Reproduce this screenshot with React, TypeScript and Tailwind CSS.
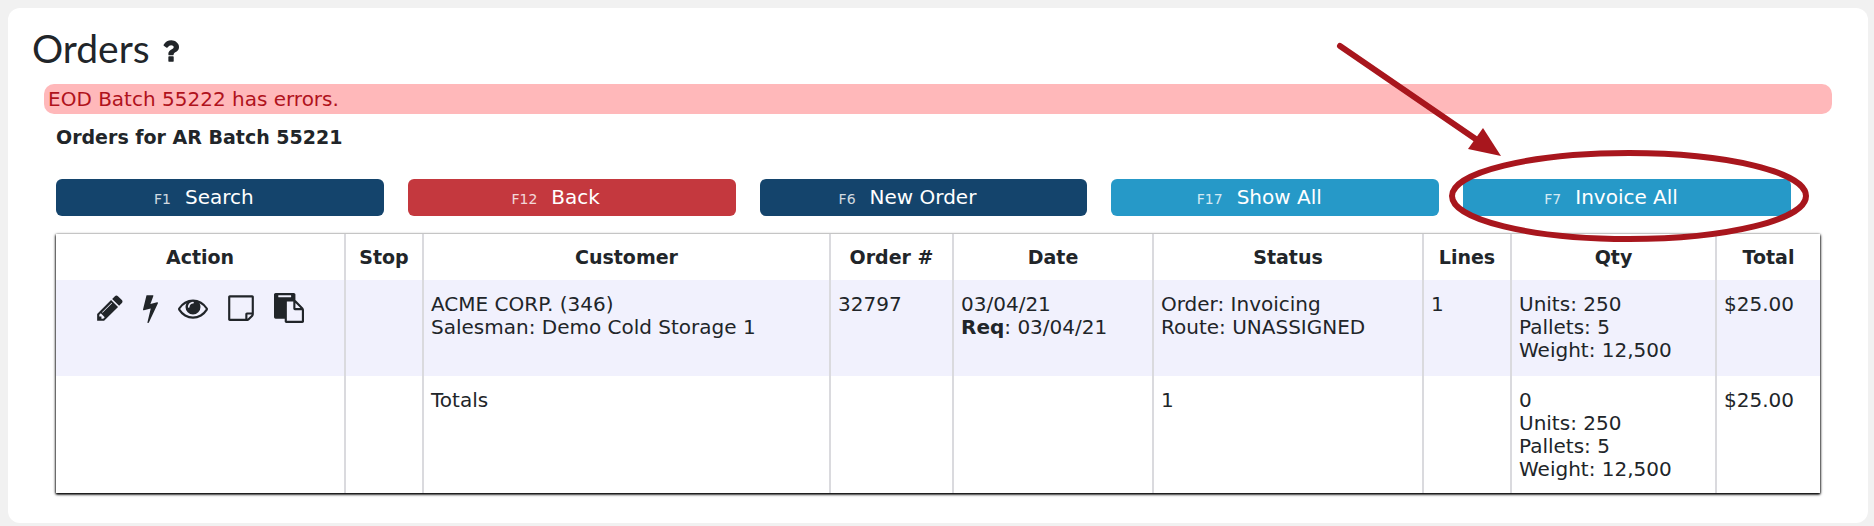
import React from "react";

const buttons = [
	{ hotkey: "F1", label: "Search", color: "bg-[#14446c]" },
	{ hotkey: "F12", label: "Back", color: "bg-[#c4383e]" },
	{ hotkey: "F6", label: "New Order", color: "bg-[#14446c]" },
	{ hotkey: "F17", label: "Show All", color: "bg-[#2699c8]" },
	{ hotkey: "F7", label: "Invoice All", color: "bg-[#2699c8]", highlight: true },
];

const columns = [
	{ title: "Action", width: "w-[290px]" },
	{ title: "Stop", width: "w-[78px]" },
	{ title: "Customer", width: "" },
	{ title: "Order #", width: "w-[123px]" },
	{ title: "Date", width: "w-[200px]" },
	{ title: "Status", width: "w-[270px]" },
	{ title: "Lines", width: "w-[88px]" },
	{ title: "Qty", width: "w-[205px]" },
	{ title: "Total", width: "w-[103px]" },
];

const actions = [
	{
		label: "Edit",
		size: "w-[26px]",
		viewBox: "128 0 1536 1792",
		path: "M491 1536l91-91-235-235-91 91v107h128v128h107zm523-928q0-22-22-22-10 0-17 7l-542 542q-7 7-7 17 0 22 22 22 10 0 17-7l542-542q7-7 7-17zm-54-192l416 416-832 832h-416v-416zm683 96q0 53-37 90l-166 166-416-416 166-165q36-38 90-38 53 0 91 38l235 234q37 39 37 91z",
	},
	{
		label: "Process",
		size: "w-[15px]",
		viewBox: "448 0 896 1792",
		path: "M1333 566q18 20 7 44l-540 1157q-13 25-42 25-4 0-14-2-17-5-25.5-19t-4.5-30l197-808-406 101q-4 1-12 1-18 0-31-11-18-15-13-39l201-825q4-14 16-23t28-9h328q19 0 32 12.5t13 29.5q0 8-5 18l-171 463 396-98q8-2 12-2 19 0 34 15z",
	},
	{
		label: "View",
		size: "w-[30px]",
		viewBox: "0 0 1792 1792",
		path: "M1664 960q-152-236-381-353 61 104 61 225 0 185-131.5 316.5t-316.5 131.5-316.5-131.5-131.5-316.5q0-121 61-225-229 117-381 353 133 205 333.5 326.5t434.5 121.5 434.5-121.5 333.5-326.5zm-720-384q0-20-14-34t-34-14q-125 0-214.5 89.5t-89.5 214.5q0 20 14 34t34 14 34-14 14-34q0-86 61-147t147-61q20 0 34-14t14-34zm848 384q0 34-20 69-140 230-376.5 368.5t-499.5 138.5-499.5-139-376.5-368q-20-35-20-69t20-69q140-229 376.5-368t499.5-139 499.5 139 376.5 368q20 35 20 69z",
	},
	{
		label: "Notes",
		size: "w-[26px]",
		viewBox: "0 -32 1536 1792",
		path: "M1400 1256h-248v248q29-10 41-22l185-185q12-12 22-41zm-280-128h288v-896h-1280v1280h896v-288q0-40 28-68t68-28zm416-928v1024q0 40-20 88t-48 76l-184 184q-28 28-76 48t-88 20h-1024q-40 0-68-28t-28-68v-1344q0-40 28-68t68-28h1344q40 0 68 28t28 68z",
	},
	{
		label: "Copy",
		size: "w-[30px]",
		viewBox: "0 0 1792 1792",
		path: "M768 1664h896v-640h-416q-40 0-68-28t-28-68v-416h-384v1152zm256-1440v-64q0-13-9.5-22.5t-22.5-9.5h-704q-13 0-22.5 9.5t-9.5 22.5v64q0 13 9.5 22.5t22.5 9.5h704q13 0 22.5-9.5t9.5-22.5zm256 672h299l-299-299v299zm512 128v672q0 40-28 68t-68 28h-960q-40 0-68-28t-28-68v-160h-544q-40 0-68-28t-28-68v-1344q0-40 28-68t68-28h1088q40 0 68 28t28 68v328q21 13 36 28l408 408q28 28 48 76t20 88z",
	},
];

function Callout() {
	return (
		<svg
			className="absolute -left-[133px] -top-[143px] w-[480px] h-[212px] max-w-none pointer-events-none"
			viewBox="0 0 480 212"
			fill="none"
			aria-hidden="true"
		>
			<path d="M10 10L150 106" stroke="#a8161d" strokeWidth="6" strokeLinecap="round" />
			<path d="M171 120L153 92L138 113z" fill="#a8161d" />
			<ellipse cx="299" cy="160" rx="177" ry="43" stroke="#a8161d" strokeWidth="6" />
		</svg>
	);
}

function Cell({ children }: { children?: React.ReactNode }) {
	return (
		<td className="border-r-2 last:border-r-0 border-[#dadade] px-[7px] pt-[13px] pb-3 align-top">
			{children}
		</td>
	);
}

function Qty() {
	return (
		<>
			<div>Units: 250</div>
			<div>Pallets: 5</div>
			<div>Weight: 12,500</div>
		</>
	);
}

function App() {
	return (
		<div className="min-h-screen bg-[#f1f1f1] pt-2 pl-2 pr-1.5 pb-1 font-['DejaVu_Sans',sans-serif] text-[20px] leading-[23px] text-[#212529]">
			<main className="bg-white rounded-xl pt-4 pb-[30px] pl-6 pr-9">
				<div className="flex items-center gap-3 h-12">
					<h1 className="font-[Lato,sans-serif] font-normal text-[39px] leading-[48px]">Orders</h1>
					<button type="button" aria-label="Help" className="pt-1.5">
						<svg className="h-6 w-[17px]" viewBox="388 256 1016 1280" fill="currentColor" aria-hidden="true">
							<path d="M1088 1256v240q0 16-12 28t-28 12h-240q-16 0-28-12t-12-28v-240q0-16 12-28t28-12h240q16 0 28 12t12 28zm316-600q0 54-15.5 101t-35 76.5-55 59.5-57.5 43.5-61 35.5q-41 23-68.5 65t-27.5 67q0 17-12 32.5t-28 15.5h-240q-15 0-25.5-18.5t-10.5-37.5v-45q0-83 65-156.5t143-108.5q59-27 84-56t25-76q0-42-46.5-74t-107.5-32q-65 0-108 29-35 25-107 115-13 16-31 16-12 0-25-8l-164-125q-13-10-15.5-25t5.5-28q160-266 464-266 80 0 161 31t146 83 106 127.5 41 158.5z" />
						</svg>
					</button>
				</div>
				<div role="alert" className="ml-3 mt-3 rounded-[10px] bg-[#ffb8ba] text-[#b0121c] px-1 h-[30px] leading-[31px]">
					EOD Batch 55222 has errors.
				</div>
				<div className="ml-6 mr-3">
					<h2 className="mt-3 font-bold text-[19px]">Orders for AR Batch 55221</h2>
					<div className="mt-[30px] mr-[29px] grid grid-cols-5 gap-6">
						{buttons.map((b) => (
							<div key={b.label} className="relative">
								<button
									type="button"
									className={`${b.color} w-full h-[37px] rounded-md text-white flex items-baseline justify-center gap-3.5 pt-[7px] pr-8`}
								>
									<small className="text-sm opacity-80">{b.hotkey}</small>
									<span>{b.label}</span>
								</button>
								{b.highlight && <Callout />}
							</div>
						))}
					</div>
					<table className="mt-[18px] w-full table-fixed border-separate border-spacing-0 shadow-[0_1px_2px_#000,0_1px_3px_#000]">
						<thead>
							<tr>
								{columns.map((c) => (
									<th
										key={c.title}
										scope="col"
										className={`${c.width} h-[46px] p-0 font-bold text-[19px] text-center border-r-2 last:border-r-0 border-[#dadade]`}
									>
										{c.title}
									</th>
								))}
							</tr>
						</thead>
						<tbody>
							<tr className="h-24 bg-[#f1f1fd]">
								<Cell>
									<div className="flex justify-center gap-5">
										{actions.map((a) => (
											<button key={a.label} type="button" aria-label={a.label}>
												<svg className={`${a.size} h-[30px]`} viewBox={a.viewBox} fill="currentColor" aria-hidden="true">
													<path d={a.path} />
												</svg>
											</button>
										))}
									</div>
								</Cell>
								<Cell />
								<Cell>
									<div>ACME CORP. (346)</div>
									<div>Salesman: Demo Cold Storage 1</div>
								</Cell>
								<Cell>32797</Cell>
								<Cell>
									<div>03/04/21</div>
									<div><b>Req</b>: 03/04/21</div>
								</Cell>
								<Cell>
									<div>Order: Invoicing</div>
									<div>Route: UNASSIGNED</div>
								</Cell>
								<Cell>1</Cell>
								<Cell><Qty /></Cell>
								<Cell>$25.00</Cell>
							</tr>
							<tr>
								<Cell />
								<Cell />
								<Cell>Totals</Cell>
								<Cell />
								<Cell />
								<Cell>1</Cell>
								<Cell />
								<Cell>
									<div>0</div>
									<Qty />
								</Cell>
								<Cell>$25.00</Cell>
							</tr>
						</tbody>
					</table>
				</div>
			</main>
		</div>
	);
}

export default App;
